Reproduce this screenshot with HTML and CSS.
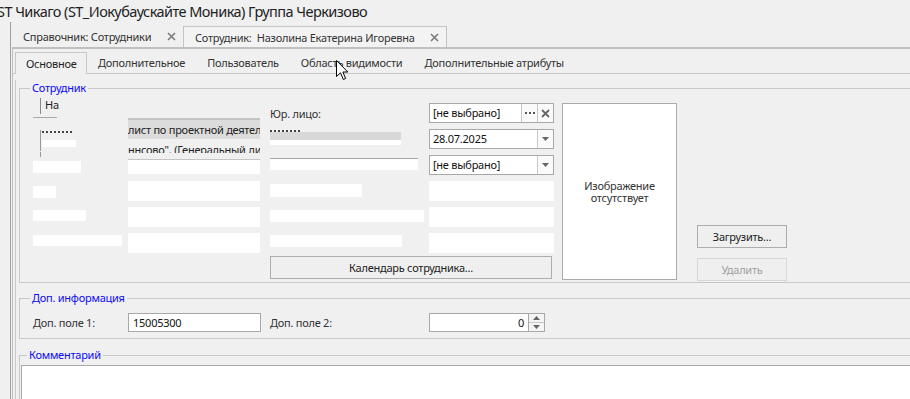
FILE: index.html
```html
<!DOCTYPE html>
<html>
<head>
    <meta charset="utf-8">
    <title>Сотрудник</title>
    <link rel="stylesheet" href="styles.css">
</head>
<body>
    <div class="title">ST Чикаго (ST_Иокубаускайте Моника) Группа Черкизово</div>
    <div class="frame">
        <div class="doc-tabs">
            <div class="doc-tab first">
                <span>Справочник: Сотрудники</span>
                <svg class="close" width="9" height="9" viewBox="0 0 9 9"><path d="M1 1L8 8M8 1L1 8" stroke="#7a7a7a" stroke-width="1.6"/></svg>
            </div>
            <div class="doc-tab active">
                <span>Сотрудник:&nbsp; Назолина Екатерина Игоревна</span>
                <svg class="close" width="9" height="9" viewBox="0 0 9 9"><path d="M1 1L8 8M8 1L1 8" stroke="#7a7a7a" stroke-width="1.6"/></svg>
            </div>
        </div>
        <div class="doc-page">
            <div class="tabs">
                <div class="tab active">Основное</div>
                <div class="tab">Дополнительное</div>
                <div class="tab">Пользователь</div>
                <div class="tab">Область видимости</div>
                <div class="tab">Дополнительные атрибуты</div>
            </div>
            <div class="tab-page">
                <fieldset class="group">
                    <legend>Сотрудник</legend>
                    <div class="form-grid">
                        <!-- колонка 1 -->
                        <div class="cell r1 c1">
                            <div class="na">На</div>
                            <div class="rule w24"></div>
                        </div>
                        <div class="cell r2 c1">
                            <div class="frag">
                                <div class="dots w30"></div>
                                <div class="mask w34 h7"></div>
                            </div>
                        </div>
                        <div class="cell r3 c1">
                            <div class="tick"></div>
                            <div class="mask w48 h12"></div>
                        </div>
                        <div class="cell r4 c1"><div class="mask w23 h12 mt5"></div></div>
                        <div class="cell r5 c1"><div class="mask w53 h11 mt3"></div></div>
                        <div class="cell r6 c1"><div class="mask w89 h11 mt2"></div></div>

                        <!-- колонка 2 -->
                        <div class="cell r1-3 c2">
                            <div class="band">лист по проектной деятельности</div>
                            <div class="cut">ннсово". (Генеральный директор</div>
                            <div class="blank-low"></div>
                        </div>
                        <div class="cell r4 c2"><div class="blank"></div></div>
                        <div class="cell r5 c2"><div class="blank"></div></div>
                        <div class="cell r6 c2"><div class="blank"></div></div>

                        <!-- колонка 3 -->
                        <div class="cell r1 c3 label">Юр. лицо:</div>
                        <div class="cell r2-3 c3">
                            <div class="dots w30 mt1"></div>
                            <div class="band-thin w131"></div>
                            <div class="mask w131 h5"></div>
                            <div class="rule w148 mt13"></div>
                            <div class="mask w148 h11"></div>
                        </div>
                        <div class="cell r4 c3"><div class="mask w92 h13 mt3"></div></div>
                        <div class="cell r5 c3"><div class="mask w154 h12 mt3"></div></div>
                        <div class="cell r6 c3"><div class="mask w132 h12 mt2"></div></div>

                        <!-- колонка 4 -->
                        <div class="cell r1 c4">
                            <div class="combo">
                                <div class="combo-text">[не выбрано]</div>
                                <div class="combo-btn">
                                    <svg width="10" height="3" viewBox="0 0 10 3"><rect x="0" y="0" width="2" height="2" fill="#555"/><rect x="4" y="0" width="2" height="2" fill="#555"/><rect x="8" y="0" width="2" height="2" fill="#555"/></svg>
                                </div>
                                <div class="combo-btn">
                                    <svg width="9" height="9" viewBox="0 0 9 9"><path d="M1 1L8 8M8 1L1 8" stroke="#666" stroke-width="1.8"/></svg>
                                </div>
                            </div>
                        </div>
                        <div class="cell r2 c4">
                            <div class="combo">
                                <div class="combo-text">28.07.2025</div>
                                <div class="combo-btn">
                                    <svg width="7" height="4" viewBox="0 0 7 4"><path d="M0 0H7L3.5 4Z" fill="#666"/></svg>
                                </div>
                            </div>
                        </div>
                        <div class="cell r3 c4">
                            <div class="combo">
                                <div class="combo-text">[не выбрано]</div>
                                <div class="combo-btn">
                                    <svg width="7" height="4" viewBox="0 0 7 4"><path d="M0 0H7L3.5 4Z" fill="#666"/></svg>
                                </div>
                            </div>
                        </div>
                        <div class="cell r4 c4"><div class="blank w125"></div></div>
                        <div class="cell r5 c4"><div class="blank w125"></div></div>
                        <div class="cell r6 c4"><div class="blank w125"></div></div>

                        <button class="btn calendar">Календарь сотрудника...</button>

                        <div class="photo">Изображение<br>отсутствует</div>

                        <div class="photo-btns">
                            <button class="btn">Загрузить...</button>
                            <button class="btn disabled">Удалить</button>
                        </div>
                    </div>
                </fieldset>

                <fieldset class="group extra">
                    <legend>Доп. информация</legend>
                    <div class="extra-row">
                        <div class="label">Доп. поле 1:</div>
                        <div class="field">15005300</div>
                        <div class="label">Доп. поле 2:</div>
                        <div class="spin">
                            <div class="spin-field">0</div>
                            <div class="spin-btns">
                                <div class="spin-btn"><svg width="7" height="4" viewBox="0 0 7 4"><path d="M0 4H7L3.5 0Z" fill="#666"/></svg></div>
                                <div class="spin-btn"><svg width="7" height="4" viewBox="0 0 7 4"><path d="M0 0H7L3.5 4Z" fill="#666"/></svg></div>
                            </div>
                        </div>
                    </div>
                </fieldset>

                <fieldset class="group comment">
                    <legend>Комментарий</legend>
                    <div class="memo"></div>
                </fieldset>
            </div>
        </div>
    </div>

    <svg class="cursor" width="13" height="21" viewBox="0 0 13 21">
        <path d="M0.5 0.5V16.5L4.5 12.8L7.3 19.5L9.6 18.5L6.9 12H11.8Z" fill="#fff" stroke="#000" stroke-width="1"/>
    </svg>
</body>
</html>
```

FILE: styles.css
```css
* {
    box-sizing: border-box;
}

body {
    margin: 0;
    width: 910px;
    height: 399px;
    overflow: hidden;
    position: relative;
    background-color: #f0f0f0;
    font-family: "Noto Sans", sans-serif;
    font-size: 11px;
    letter-spacing: -0.25px;
    color: #1e1e1e;
}

.title {
    height: 22px;
    line-height: 23px;
    font-size: 14.5px;
    letter-spacing: -0.55px;
    margin-left: -3px;
    white-space: nowrap;
    color: #222;
}

.frame {
    margin-left: 10px;
    border-left: 1px solid #a0a0a0;
    width: 1200px;
    height: 377px;
}

/* вкладки документов */
.doc-tabs {
    display: flex;
    padding: 4px 0 0 1px;
    height: 25px;
}

.doc-tab {
    display: flex;
    align-items: center;
    justify-content: space-between;
    height: 21px;
    padding: 0 7px 0 11px;
    color: #333;
    white-space: nowrap;
}

.doc-tab.first {
    width: 171px;
}

.doc-tab.active {
    width: 264px;
    border: 1px solid #c4c4c4;
    border-bottom: none;
    background: #f3f3f3;
}

.doc-page {
    margin-left: 1px;
    border-top: 2px solid #c0c0c0;
    border-left: 1px solid #c0c0c0;
    height: 352px;
}

/* вкладки формы */
.tabs {
    display: flex;
    padding: 3px 0 0 2px;
    height: 25px;
    border-bottom: 1px solid #c8c8c8;
}

.tab {
    height: 21px;
    line-height: 21px;
    padding: 0 11px;
    color: #333;
    white-space: nowrap;
}

.tab.active {
    width: 72px;
    height: 22px;
    margin-bottom: -1px;
    padding-left: 10px;
    border: 1px solid #c8c8c8;
    border-bottom: none;
    background: #f0f0f0;
    color: #1e1e1e;
}

.tab-page {
    margin-left: 2px;
    padding-left: 3px;
    border-left: 1px solid #c8c8c8;
    height: 330px;
}

/* группы */
.group {
    margin: 6px 0 0;
    padding: 7px 0 3px 13px;
    border: 1px solid #c8c8c8;
    width: 1100px;
    min-width: 0;
}

.group legend {
    color: #0a0aff;
    padding: 0 2px;
    margin-left: -3px;
    line-height: 16px;
}

.group.extra {
    margin-top: 7px;
    padding-bottom: 6px;
}

.group.comment {
    margin-top: 8px;
    padding: 2px 0 0 1px;
    height: 60px;
}

.group.comment legend {
    margin-left: 6px;
}

.form-grid {
    display: grid;
    grid-template-columns: 95px 142px 159px 133px 135px 90px;
    grid-template-rows: repeat(6, 20px) 20px;
    row-gap: 6px;
}

.r1 { grid-row: 1; }
.r2 { grid-row: 2; }
.r3 { grid-row: 3; }
.r4 { grid-row: 4; }
.r5 { grid-row: 5; }
.r6 { grid-row: 6; }
.r1-3 { grid-row: 1 / 4; }
.r2-3 { grid-row: 2 / 4; }
.c1 { grid-column: 1; }
.c2 { grid-column: 2; }
.c3 { grid-column: 3; }
.c4 { grid-column: 4; }

.label {
    display: flex;
    align-items: center;
    color: #333;
    white-space: nowrap;
}

/* закрытые данные */
.mask {
    background: #fff;
}

.blank {
    width: 132px;
    height: 20px;
    background: #fff;
}

.rule {
    height: 1px;
    background: #a8a8a8;
}

.dots {
    height: 2px;
    border-top: 2px dotted #444;
}

.na {
    margin: -5px 0 0 7px;
    padding-left: 4px;
    height: 16px;
    line-height: 14px;
    border-left: 1px solid #888;
}

.na + .rule {
    margin-top: 3px;
}

.frag {
    margin: 1px 0 0 7px;
    padding: 1px 0 0 1px;
    height: 21px;
    border-left: 1px solid #999;
}

.frag .mask {
    margin-top: 7px;
}

.tick {
    margin: -3px 0 0 7px;
    width: 1px;
    height: 5px;
    background: #999;
}

.tick + .mask {
    margin-top: 4px;
}

.band {
    margin-top: 15px;
    width: 132px;
    height: 21px;
    border-top: 2px solid #c4c4c4;
    background: #dcdcdc;
    line-height: 12px;
    padding-top: 4px;
    white-space: nowrap;
    overflow: hidden;
    color: #222;
}

.cut {
    width: 132px;
    height: 14px;
    line-height: 22px;
    white-space: nowrap;
    overflow: hidden;
    color: #222;
}

.blank-low {
    margin-top: 6px;
    width: 132px;
    height: 15px;
    border-top: 1px solid #c4c4c4;
    background: #fff;
}

.band-thin {
    height: 8px;
    background: #d8d8d8;
}

.w23 { width: 23px; }
.w24 { width: 24px; }
.w30 { width: 30px; }
.w34 { width: 34px; }
.w48 { width: 48px; }
.w53 { width: 53px; }
.w89 { width: 89px; }
.w92 { width: 92px; }
.w125 { width: 125px; }
.w131 { width: 131px; }
.w132 { width: 132px; }
.w148 { width: 148px; }
.w154 { width: 154px; }
.h5 { height: 5px; }
.h7 { height: 7px; }
.h11 { height: 11px; }
.h12 { height: 12px; }
.h13 { height: 13px; }
.mt1 { margin-top: 1px; }
.mt2 { margin-top: 2px; }
.mt3 { margin-top: 3px; }
.mt5 { margin-top: 5px; }
.mt13 { margin-top: 13px; }

/* поля выбора */
.combo {
    display: flex;
    width: 125px;
    height: 20px;
    border: 1px solid #a8a8a8;
    background: #fff;
}

.combo-text {
    flex: 1;
    padding-left: 3px;
    line-height: 18px;
    color: #111;
    white-space: nowrap;
}

.combo-btn {
    width: 16px;
    border-left: 1px solid #c8c8c8;
    display: flex;
    align-items: center;
    justify-content: center;
    background: #fafafa;
}

/* кнопки */
.btn {
    height: 23px;
    width: 90px;
    padding: 0;
    border: 1px solid #adadad;
    background: #efefef;
    font-family: "Noto Sans", sans-serif;
    font-size: 11px;
    letter-spacing: -0.25px;
    color: #222;
}

.btn.disabled {
    border-color: #d6d6d6;
    color: #a0a0a0;
}

.btn.calendar {
    grid-column: 3 / 5;
    grid-row: 7;
    width: 282px;
    margin-top: -3px;
}

.photo {
    grid-column: 5;
    grid-row: 1 / 8;
    width: 115px;
    height: 177px;
    border: 1px solid #aaa;
    background: #fff;
    display: flex;
    align-items: center;
    justify-content: center;
    text-align: center;
    line-height: 12px;
    color: #333;
}

.photo-btns {
    grid-column: 6;
    grid-row: 1 / 8;
    display: flex;
    flex-direction: column;
    justify-content: flex-end;
    gap: 10px;
    height: 178px;
}

/* доп. информация */
.extra-row {
    display: grid;
    grid-template-columns: 95px 142px 159px 133px;
    height: 19px;
}

.field {
    width: 133px;
    height: 19px;
    border: 1px solid #a8a8a8;
    background: #fff;
    padding-left: 4px;
    line-height: 17px;
    color: #111;
}

.spin {
    display: flex;
    width: 116px;
    height: 19px;
}

.spin-field {
    flex: 1;
    border: 1px solid #a8a8a8;
    background: #fff;
    text-align: right;
    padding-right: 4px;
    line-height: 17px;
    color: #111;
}

.spin-btns {
    width: 16px;
    display: flex;
    flex-direction: column;
    border: 1px solid #a8a8a8;
    border-left: none;
}

.spin-btn {
    flex: 1;
    display: flex;
    align-items: center;
    justify-content: center;
    background: #f4f4f4;
}

.spin-btn + .spin-btn {
    border-top: 1px solid #c8c8c8;
}

.memo {
    width: 1000px;
    height: 40px;
    border: 1px solid #a8a8a8;
    background: #fff;
}

.cursor {
    position: absolute;
    left: 336px;
    top: 60px;
}
```
